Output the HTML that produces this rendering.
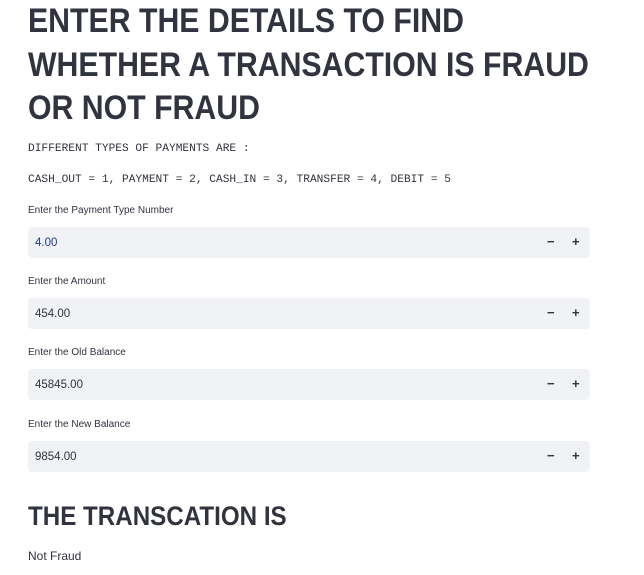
<!DOCTYPE html>
<html><head><style>
body{margin:0;background:#fff;width:644px;height:575px;overflow:hidden;position:relative;font-family:"Liberation Sans",sans-serif;color:#31333f}
.a{position:absolute;left:28px;white-space:nowrap}
h1{margin:0;font-size:34px;font-weight:bold;line-height:43.5px;color:#31333f;transform:scaleX(.89);transform-origin:0 0;position:absolute;left:28px;top:0;white-space:nowrap}
.m{font-family:"Liberation Mono",monospace;font-size:11.2px;color:#31333f}
.l{font-size:10px;color:#31333f}
.in{position:absolute;left:28px;width:562px;height:31px;background:#f0f2f6;border-radius:4px}
.in span{position:absolute;left:7px;top:10px;font-size:11.5px;color:#31333f}
.in b{position:absolute;top:7px;font-size:13px;font-weight:bold;color:#31333f}
</style></head><body>
<h1>ENTER THE DETAILS TO FIND<br>WHETHER A TRANSACTION IS FRAUD<br>OR NOT FRAUD</h1>
<div class="a m" style="top:143px">DIFFERENT TYPES OF PAYMENTS ARE :</div>
<div class="a m" style="top:174px">CASH_OUT = 1, PAYMENT = 2, CASH_IN = 3, TRANSFER = 4, DEBIT = 5</div>
<div class="a l" style="top:205px">Enter the Payment Type Number</div>
<div class="in" style="top:227px"><span style="color:#1f3a8a">4.00</span><b style="left:519px">−</b><b style="left:544px">+</b></div>
<div class="a l" style="top:276px">Enter the Amount</div>
<div class="in" style="top:298px"><span>454.00</span><b style="left:519px">−</b><b style="left:544px">+</b></div>
<div class="a l" style="top:347px">Enter the Old Balance</div>
<div class="in" style="top:369px"><span>45845.00</span><b style="left:519px">−</b><b style="left:544px">+</b></div>
<div class="a l" style="top:419px">Enter the New Balance</div>
<div class="in" style="top:441px"><span>9854.00</span><b style="left:519px">−</b><b style="left:544px">+</b></div>
<div class="a" style="top:501px;font-size:27px;font-weight:bold;transform:scaleX(.895);transform-origin:0 0">THE TRANSCATION IS</div>
<div class="a" style="top:549px;font-size:12px">Not Fraud</div>
</body></html>
